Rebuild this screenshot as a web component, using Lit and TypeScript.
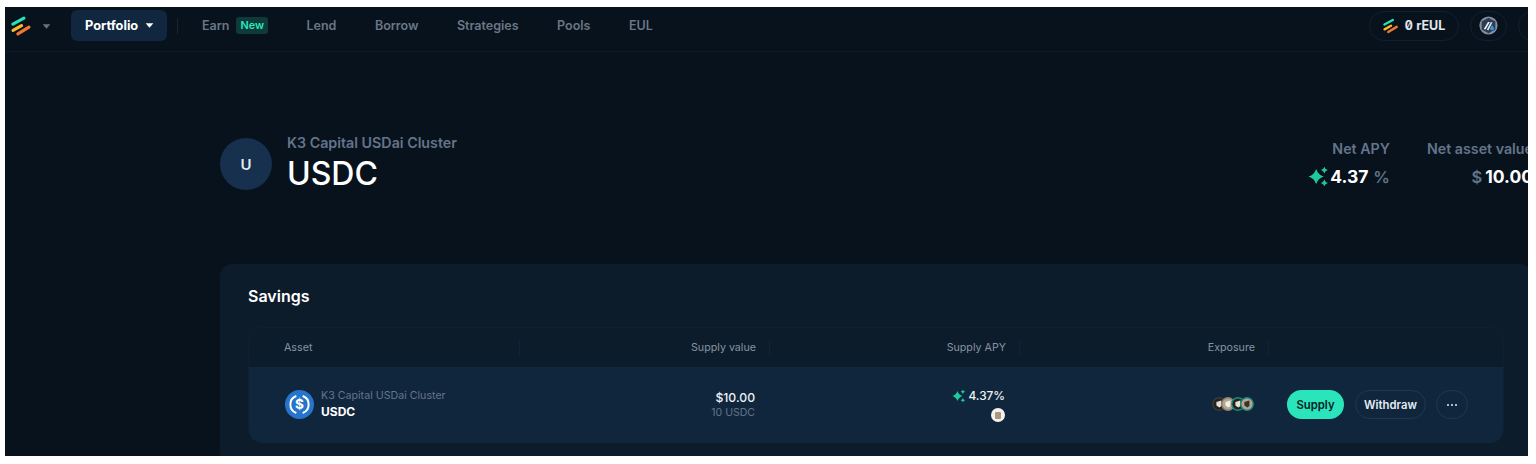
import { LitElement, html, css, svg } from "lit";
import { customElement } from "lit/decorators.js";

const logo = (w: number, h: number) => html`<svg width=${w} height=${h} viewBox="0 0 22 22" fill="none" stroke-linecap="round" stroke-width="3.3">
  <path d="M2 9 L13.5 2.8" stroke="#2ae0b4"/><path d="M2.2 15.6 L11 10.6" stroke="#f5b82e"/><path d="M7.2 19.2 L18.8 12.2" stroke="#f2762e"/></svg>`;

const sparkle = (s: number) => html`<svg width=${s} height=${s} viewBox="0 0 18 18" fill="#1fc9a0">
  <path d="M7 2.5 Q8.6 7.4 13.5 9 Q8.6 10.6 7 15.5 Q5.4 10.6 .5 9 Q5.4 7.4 7 2.5Z"/>
  <path d="M14 .6 Q14.6 2.9 17 3.5 Q14.6 4.1 14 6.4 Q13.4 4.1 11 3.5 Q13.4 2.9 14 .6Z"/>
  <path d="M14 11.6 Q14.6 13.9 17 14.5 Q14.6 15.1 14 17.4 Q13.4 15.1 11 14.5 Q13.4 13.9 14 11.6Z"/></svg>`;

const caret = (w: number, color: string) => html`<svg width=${w} height=${Math.round(w * 0.6)} viewBox="0 0 10 6" fill=${color}><path d="M0.4 0.4 H9.6 L5 5.6Z"/></svg>`;

const usdc = html`<svg width="29" height="29" viewBox="0 0 32 32">
  <circle cx="16" cy="16" r="16" fill="#2775ca"/>
  <path d="M12.5 6.6 A10 10 0 0 0 12.5 25.4" fill="none" stroke="#fff" stroke-width="2.2"/>
  <path d="M19.5 6.6 A10 10 0 0 1 19.5 25.4" fill="none" stroke="#fff" stroke-width="2.2"/>
  <text x="16" y="21.5" text-anchor="middle" font-size="15" font-weight="700" fill="#fff" font-family="Inter, sans-serif">$</text></svg>`;

const arb = html`<svg width="19" height="19" viewBox="0 0 20 20">
  <circle cx="10" cy="10" r="9.6" fill="#7f90a5"/>
  <path d="M10 1.8 L17.2 5.9 V14.1 L10 18.2 L2.8 14.1 V5.9Z" fill="#2d3c50"/>
  <path d="M5 14 L9.4 6.2 H11.4 L7 14Z" fill="#f2f5f8"/>
  <path d="M8.2 14.4 L12.4 6.6 H14.2 L10 15Z" fill="#dfe6ee"/>
  <path d="M11.5 13.6 L13.8 9.6 L16.2 13.6 L13.6 15.2Z" fill="#2d9cec"/></svg>`;

const chip = (bg: string, ring: string, fg: string) => svg`<svg width="14" height="14" viewBox="0 0 14 14">
  <circle cx="7" cy="7" r="6.2" fill=${bg} stroke=${ring} stroke-width="1.4"/>
  <path d="M4.4 5 L9.4 3.6 V9 L7.4 10.6 L4.4 8.6Z" fill=${fg}/></svg>`;

@customElement("app-root")
export class AppRoot extends LitElement {
  static styles = css`
    :host { display: block; background: #fff; padding: 7px 8px 8px 5px; height: 464px; box-sizing: border-box; font-family: Inter, "Liberation Sans", sans-serif; }
    .frame { height: 449px; background: #07121d; overflow: hidden; }
    header { height: 45px; box-sizing: border-box; border-bottom: 1px solid #0c1a28; display: flex; align-items: center; padding: 0 0 7px 6px; width: 1560px; }
    .logo { display: flex; align-items: center; width: 21px; height: 22px; }
    .drop { margin-left: 10px; margin-top: 1px; display: flex; }
    .pill-nav { margin-left: 20px; height: 31px; width: 96px; box-sizing: border-box; background: #10273f; border-radius: 6px; display: flex; align-items: center; gap: 7px; padding-left: 14px; color: #fff; font-size: 12.8px; font-weight: 700; }
    .sep { width: 1px; height: 16px; background: #14263a; margin: 0 24px 0 10px; }
    nav { display: flex; align-items: center; color: #6a7686; font-size: 12.5px; font-weight: 600; gap: 38.5px; }
    .earn { display: flex; align-items: center; gap: 7px; }
    .new { background: #0e3a3b; color: #2ae8bb; font-size: 10.8px; font-weight: 600; padding: 0 4px; height: 17px; line-height: 17px; border-radius: 3px; }
    .right { margin-left: auto; display: flex; gap: 11px; align-items: center; margin-right: 10px; }
    .round { height: 30px; box-sizing: border-box; border: 1px solid #101f30; border-radius: 15px; display: flex; align-items: center; justify-content: center; }
    .reul { width: 90px; gap: 6px; color: #e2e7ed; font-size: 12.5px; font-weight: 700; font-feature-settings: "zero" 1, "tnum" 1; }
    .net { width: 37px; }
    .extra { width: 37px; }

    .hero { margin: 86px 0 0 215px; width: 1313px; display: flex; align-items: center; height: 52px; }
    .avatar { width: 52px; height: 52px; border-radius: 50%; background: #16304e; color: #e6ebf1; display: flex; align-items: center; justify-content: center; font-size: 15px; font-weight: 600; flex: none; }
    .title { margin-left: 15px; flex: 1; display: flex; flex-direction: column; }
    .sub { color: #64748a; font-size: 14.25px; font-weight: 600; line-height: 17px; }
    .big { color: #fff; font-size: 32px; font-weight: 500; line-height: 40px; margin-top: 3px; }
    .stats { display: flex; gap: 37px; }
    .stat { display: flex; flex-direction: column; align-items: flex-end; gap: 9px; margin-top: -1px; }
    .stat .l { color: #64748a; font-size: 14.25px; font-weight: 600; line-height: 17px; white-space: nowrap; }
    .stat .v { color: #fff; font-size: 17.5px; font-weight: 700; line-height: 22px; display: flex; align-items: center; gap: 3px; white-space: nowrap; }
    .stat .v .u { color: #64748a; font-size: 16.5px; font-weight: 600; margin-left: 2px; }
    .stat .v svg { margin-right: -2px; }

    .card { margin: 74px 0 0 215px; width: 1312px; background: #0c1c2b; border-radius: 12px; padding: 22px 28px 0; box-sizing: border-box; height: 200px; }
    h2 { margin: 0; color: #fff; font-size: 16px; font-weight: 600; line-height: 20px; }
    .table { margin-top: 21px; width: 1256px; border: 1px solid #10202f; border-bottom: 0; border-radius: 14px; box-sizing: border-box; overflow: hidden; height: 116px; }
    .grid { display: grid; grid-template-columns: 271px 250px 250px 249px 1fr; }
    .head { height: 39px; align-items: center; color: #8793a2; font-size: 10.7px; }
    .head > div { text-align: right; padding-right: 13px; border-right: 1px solid #132333; height: 16px; line-height: 16px; }
    .head > div:first-child { text-align: left; padding-left: 35px; }
    .head > div:last-child { border: 0; }
    .row { height: 76px; margin: 0 -1px; background: #10263d; align-items: center; }
    .cell { text-align: right; padding-right: 14px; }
    .asset { display: flex; align-items: center; gap: 7px; padding-left: 37px; text-align: left; margin-top: -1px; }
    .asset .txt { margin-top: -2px; }
    .asset .a1 { color: #64748a; font-size: 10.66px; line-height: 15px; }
    .asset .a2 { color: #fff; font-size: 12px; font-weight: 700; line-height: 16px; margin-top: 1px; }
    .m1 { color: #eef2f6; font-size: 12.2px; font-weight: 500; line-height: 16px; }
    .m2 { color: #64748a; font-size: 10.5px; line-height: 14px; }
    .apy { display: flex; flex-direction: column; align-items: flex-end; gap: 4px; }
    .apy .p { color: #eef2f6; font-size: 11.8px; font-weight: 500; display: flex; align-items: center; gap: 3px; line-height: 16px; }
    .mini { width: 14px; height: 14px; border-radius: 50%; background: #f4f1ec; display: flex; align-items: center; justify-content: center; }
    .mini i { display: block; width: 6px; height: 7px; background: #a89680; border-radius: 1px; }
    .exp { display: flex; justify-content: flex-end; margin-top: -2px; }
    .exp svg { margin-left: -4.5px; }
    .acts { display: flex; padding-left: 19px; align-items: center; margin-top: -1px; }
    .btn { height: 29px; box-sizing: border-box; border-radius: 15px; display: flex; align-items: center; justify-content: center; font-size: 11.3px; font-weight: 600; }
    .supply { width: 57px; background: #2ae5bb; color: #07221f; }
    .ghost { border: 1px solid #1b3a50; color: #e4edf3; }
    .wd { width: 71px; margin-left: 11px; }
    .more { width: 32px; gap: 2px; margin-left: 10px; }
    .more i { width: 2px; height: 2px; border-radius: 50%; background: #e4edf3; }
  `;

  render() {
    return html`<div class="frame">
      <header>
        <span class="logo">${logo(22, 22)}</span>
        <span class="drop">${caret(9, "#66727f")}</span>
        <div class="pill-nav">Portfolio ${caret(9, "#fff")}</div>
        <span class="sep"></span>
        <nav>
          <span class="earn">Earn <span class="new">New</span></span>
          <span>Lend</span><span>Borrow</span><span>Strategies</span><span>Pools</span><span>EUL</span>
        </nav>
        <div class="right">
          <div class="round reul">${logo(16, 16)}<span>0 rEUL</span></div>
          <div class="round net">${arb}</div>
          <div class="round extra"></div>
        </div>
      </header>

      <section class="hero">
        <div class="avatar">U</div>
        <div class="title"><span class="sub">K3 Capital USDai Cluster</span><span class="big">USDC</span></div>
        <div class="stats">
          <div class="stat"><span class="l">Net APY</span><span class="v">${sparkle(21)}4.37 <span class="u">%</span></span></div>
          <div class="stat"><span class="l">Net asset value</span><span class="v"><span class="u">$</span>10.00</span></div>
        </div>
      </section>

      <section class="card">
        <h2>Savings</h2>
        <div class="table">
          <div class="grid head">
            <div>Asset</div><div>Supply value</div><div>Supply APY</div><div>Exposure</div><div></div>
          </div>
          <div class="grid row">
            <div class="asset">${usdc}<div class="txt"><div class="a1">K3 Capital USDai Cluster</div><div class="a2">USDC</div></div></div>
            <div class="cell"><div class="m1">$10.00</div><div class="m2">10 USDC</div></div>
            <div class="cell apy"><span class="p">${sparkle(14)}4.37%</span><span class="mini"><i></i></span></div>
            <div class="cell exp">${chip("#26231f", "#3a3a38", "#e6e0d6")}${chip("#b5a593", "#8d8273", "#f1ece4")}${chip("#26231f", "#1c8a78", "#e6e0d6")}${chip("#b5a593", "#1c8a78", "#3a3128")}</div>
            <div class="acts">
              <div class="btn supply">Supply</div>
              <div class="btn ghost wd">Withdraw</div>
              <div class="btn ghost more"><i></i><i></i><i></i></div>
            </div>
          </div>
        </div>
      </section>
    </div>`;
  }
}
